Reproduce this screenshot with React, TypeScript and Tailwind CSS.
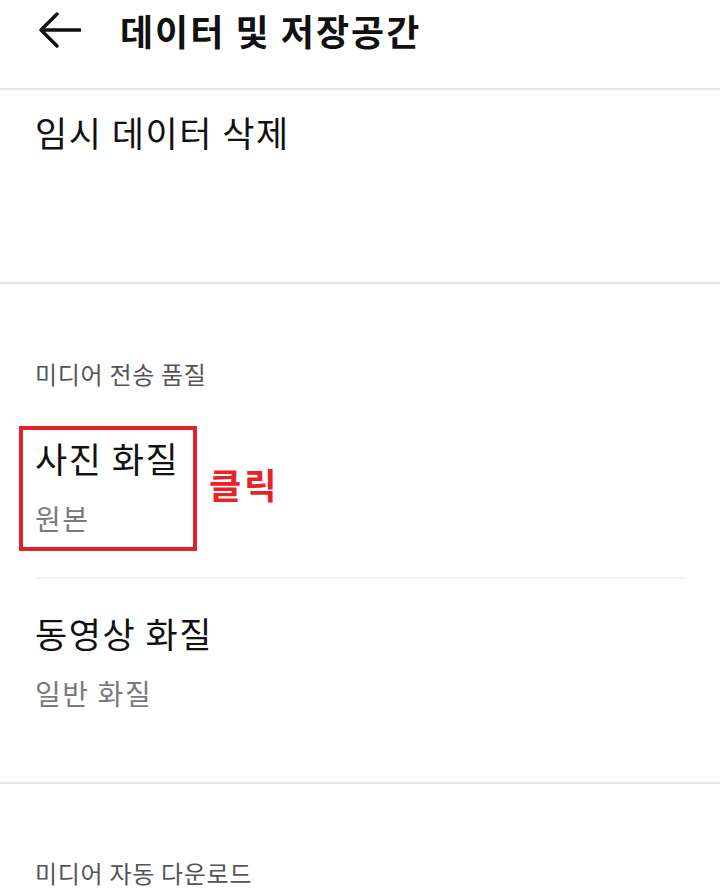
import React from "react";

const font = { fontFamily: '"Noto Sans CJK KR", "Noto Sans", sans-serif' };

export default function App() {
  return (
    <div className="w-[720px] h-[890px] bg-white overflow-hidden" style={font}>
      <div className="h-[90px] flex items-start pt-[6px] border-b-2 border-[#e6e6e6]">
        <div className="h-[48px] flex items-center ml-[38px]">
          <svg width="43" height="36" viewBox="0 0 43 36" fill="none">
            <path d="M42 18H3M19 2L3 18L19 34" stroke="#111" strokeWidth="3.4" strokeLinecap="round" strokeLinejoin="round" />
          </svg>
        </div>
        <div className="ml-[39px] text-[36px] leading-[48px] font-bold text-[#111] tracking-[2px]">데이터 및 저장공간</div>
      </div>

      <div className="h-[194px] pt-[18px] pl-[35px] border-b-2 border-[#e6e6e6]">
        <div className="text-[35px] leading-[48px] text-[#111] tracking-[1.5px]">임시 데이터 삭제</div>
      </div>

      <div className="pt-[74px] pl-[35px]">
        <div className="text-[24px] leading-[32px] text-[#555] tracking-[0.7px]">미디어 전송 품질</div>
      </div>

      <div className="relative pl-[35px] pr-[34px]">
        <div className="pt-[44px] h-[214px]">
          <div className="text-[35px] leading-[48px] text-[#111] tracking-[1.5px]">사진 화질</div>
          <div className="mt-[18px] text-[28px] leading-[36px] text-[#7a7a7a] tracking-[1.6px]">원본</div>
        </div>
        <div className="absolute left-[19px] top-[36px] w-[178px] h-[125px] border-[4px] border-[#e3212b]" />
        <div className="absolute left-[209px] top-[70px] text-[35px] leading-[48px] font-bold text-[#e8212b] tracking-[3px]">클릭</div>
        <div className="h-[2px] bg-[#f4f4f4] -mt-[27px]" />
      </div>

      <div className="pl-[35px] h-[205px] border-b-2 border-[#e6e6e6]">
        <div className="pt-[30px] text-[35px] leading-[48px] text-[#111] tracking-[1.5px]">동영상 화질</div>
        <div className="mt-[18px] text-[28px] leading-[36px] text-[#7a7a7a] tracking-[1.6px]">일반 화질</div>
      </div>

      <div className="pt-[73px] pl-[35px]">
        <div className="text-[24px] leading-[32px] text-[#555] tracking-[0.7px]">미디어 자동 다운로드</div>
      </div>
    </div>
  );
}
